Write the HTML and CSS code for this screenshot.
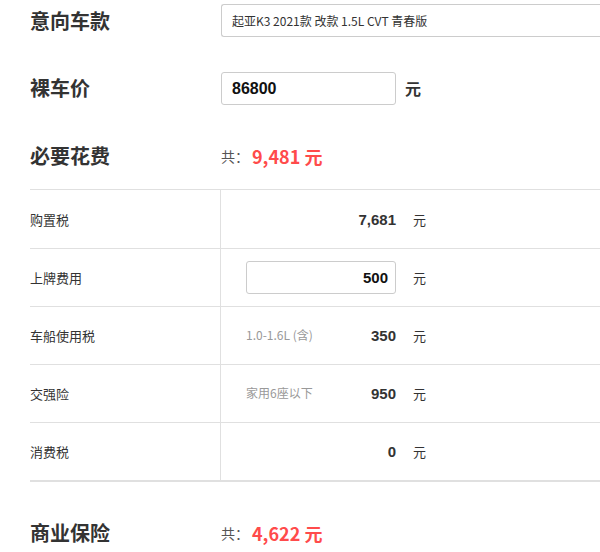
FILE: index.html
```html
<!DOCTYPE html>
<html lang="zh-CN">
<head>
<meta charset="utf-8">
<link rel="stylesheet" href="styles.css">
</head>
<body>
<div class="page">
  <div class="field first">
    <div class="title">意向车款</div>
    <div class="select">起亚K3 2021款 改款 1.5L CVT 青春版</div>
  </div>
  <div class="field">
    <div class="title">裸车价</div>
    <div class="price-input">86800</div>
    <div class="price-unit">元</div>
  </div>
  <div class="field">
    <div class="title">必要花费</div>
    <div class="total">共：<span class="total-num">9,481 元</span></div>
  </div>
  <div class="table">
    <div class="row">
      <div class="label">购置税</div>
      <div class="cell">
        <div class="value-box"><span class="note"></span><span class="value">7,681</span></div>
        <span class="unit">元</span>
      </div>
    </div>
    <div class="row">
      <div class="label">上牌费用</div>
      <div class="cell">
        <div class="value-input">500</div>
        <span class="unit">元</span>
      </div>
    </div>
    <div class="row">
      <div class="label">车船使用税</div>
      <div class="cell">
        <div class="value-box"><span class="note">1.0-1.6L (含)</span><span class="value">350</span></div>
        <span class="unit">元</span>
      </div>
    </div>
    <div class="row">
      <div class="label">交强险</div>
      <div class="cell">
        <div class="value-box"><span class="note">家用6座以下</span><span class="value">950</span></div>
        <span class="unit">元</span>
      </div>
    </div>
    <div class="row">
      <div class="label">消费税</div>
      <div class="cell">
        <div class="value-box"><span class="note"></span><span class="value">0</span></div>
        <span class="unit">元</span>
      </div>
    </div>
  </div>
  <div class="field last">
    <div class="title">商业保险</div>
    <div class="total">共：<span class="total-num">4,622 元</span></div>
  </div>
</div>
</body>
</html>
```

FILE: styles.css
```css
* { box-sizing: border-box; }
html, body {
  margin: 0;
  padding: 0;
  background: #fff;
}
body {
  font-family: "Noto Sans CJK SC", "Liberation Sans", sans-serif;
  color: #333;
  width: 600px;
  height: 552px;
  overflow: hidden;
}
.page {
  padding-left: 30px;
}
.field {
  display: flex;
  align-items: center;
  height: 34px;
  margin-top: 34px;
}
.field.first {
  margin-top: 4px;
  height: 33px;
}
.field.last {
  margin-top: 34px;
}
.title {
  width: 191px;
  flex: none;
  font-size: 20px;
  font-weight: bold;
  color: #333;
  line-height: 1;
}
.select {
  flex: none;
  width: 400px;
  height: 33px;
  border: 1px solid #ccc;
  border-right: none;
  border-radius: 3px 0 0 3px;
  padding-left: 10px;
  font-size: 12px;
  line-height: 31px;
  color: #333;
  white-space: nowrap;
}
.price-input {
  width: 175px;
  height: 33px;
  border: 1px solid #ccc;
  border-radius: 3px;
  padding-left: 10px;
  font-family: "Liberation Sans", sans-serif;
  font-size: 16px;
  font-weight: bold;
  color: #111;
  line-height: 31px;
}
.price-unit {
  margin-left: 9px;
  font-size: 16px;
  font-weight: bold;
  color: #333;
}
.total {
  font-size: 14px;
  color: #555;
  display: flex;
  align-items: center;
}
.total-num {
  margin-left: 3px;
  font-size: 18px;
  font-weight: bold;
  color: #ff4b4b;
}
.table {
  margin-top: 16px;
  border-top: 1px solid #e0e0e0;
  border-bottom: 2px solid #e0e0e0;
}
.row {
  display: flex;
  height: 58px;
}
.row + .row {
  border-top: 1px solid #e0e0e0;
}
.label {
  width: 191px;
  flex: none;
  display: flex;
  align-items: center;
  font-size: 13px;
  color: #333;
  border-right: 1px solid #e0e0e0;
}
.cell {
  flex: 1;
  display: flex;
  align-items: center;
  padding-left: 25px;
}
.value-box {
  width: 150px;
  display: flex;
  justify-content: space-between;
  align-items: center;
}
.note {
  font-size: 12px;
  color: #999;
  margin-top: -3px;
}
.value {
  font-family: "Liberation Sans", sans-serif;
  font-size: 15px;
  font-weight: bold;
  color: #333;
}
.value-input {
  width: 150px;
  height: 33px;
  border: 1px solid #ccc;
  border-radius: 3px;
  padding-right: 7px;
  text-align: right;
  font-family: "Liberation Sans", sans-serif;
  font-size: 15px;
  font-weight: bold;
  color: #111;
  line-height: 31px;
}
.unit {
  margin-left: 17px;
  font-size: 13px;
  color: #333;
}
```
